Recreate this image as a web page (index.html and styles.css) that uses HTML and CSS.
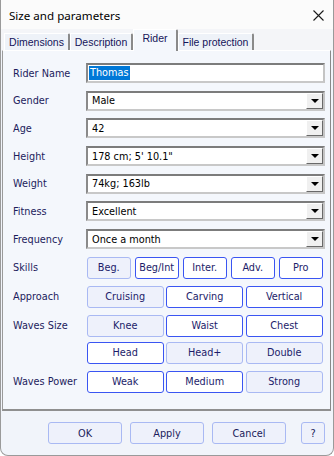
FILE: index.html
```html
<!DOCTYPE html>
<html lang="en">
<head>
  <meta charset="UTF-8" />
  <title>Size and parameters</title>
  <link rel="stylesheet" href="styles.css">
</head>
<body>

  <div class="window">
    <div class="titlebar">
      <span class="title">Size and parameters</span>
      <svg class="close" width="11" height="11" viewBox="0 0 11 11">
        <path d="M0.5 0.5 L10.5 10.5 M10.5 0.5 L0.5 10.5" stroke="#1a1a1a" stroke-width="1.1" fill="none"/>
      </svg>
    </div>

    <div class="tabs">
      <div class="tab tab-dim">Dimensions</div>
      <div class="tab tab-desc">Description</div>
      <div class="tab tab-rider active">Rider</div>
      <div class="tab tab-file">File protection</div>
    </div>

    <div class="panel">
      <div class="row">
        <span class="lbl">Rider Name</span>
        <div class="field"><span class="selected">Thomas</span></div>
      </div>
      <div class="row">
        <span class="lbl">Gender</span>
        <div class="field combo"><span class="value">Male</span><span class="drop"></span></div>
      </div>
      <div class="row">
        <span class="lbl">Age</span>
        <div class="field combo"><span class="value">42</span><span class="drop"></span></div>
      </div>
      <div class="row">
        <span class="lbl">Height</span>
        <div class="field combo"><span class="value">178 cm; 5' 10.1"</span><span class="drop"></span></div>
      </div>
      <div class="row">
        <span class="lbl">Weight</span>
        <div class="field combo"><span class="value">74kg; 163lb</span><span class="drop"></span></div>
      </div>
      <div class="row">
        <span class="lbl">Fitness</span>
        <div class="field combo"><span class="value">Excellent</span><span class="drop"></span></div>
      </div>
      <div class="row">
        <span class="lbl">Frequency</span>
        <div class="field combo"><span class="value">Once a month</span><span class="drop"></span></div>
      </div>

      <div class="row btn-row first">
        <span class="lbl">Skills</span>
        <div class="choices five">
          <span class="choice">Beg.</span>
          <span class="choice on">Beg/Int</span>
          <span class="choice on">Inter.</span>
          <span class="choice on">Adv.</span>
          <span class="choice on">Pro</span>
        </div>
      </div>
      <div class="row btn-row">
        <span class="lbl">Approach</span>
        <div class="choices three">
          <span class="choice">Cruising</span>
          <span class="choice on">Carving</span>
          <span class="choice on">Vertical</span>
        </div>
      </div>
      <div class="row btn-row top">
        <span class="lbl">Waves Size</span>
        <div class="choices three two">
          <span class="choice">Knee</span>
          <span class="choice on">Waist</span>
          <span class="choice on">Chest</span>
          <span class="choice on">Head</span>
          <span class="choice">Head+</span>
          <span class="choice">Double</span>
        </div>
      </div>
      <div class="row btn-row">
        <span class="lbl">Waves Power</span>
        <div class="choices three">
          <span class="choice on">Weak</span>
          <span class="choice on">Medium</span>
          <span class="choice">Strong</span>
        </div>
      </div>
    </div>

    <div class="footer">
      <span class="push">OK</span>
      <span class="push">Apply</span>
      <span class="push">Cancel</span>
      <span class="push help">?</span>
    </div>
  </div>

</body>
</html>
```

FILE: styles.css
```css
* {
  margin: 0;
  padding: 0;
  box-sizing: border-box;
}

body {
  background: #ffffff;
  font-family: "DejaVu Sans Condensed", "DejaVu Sans", sans-serif;
  font-stretch: condensed;
  font-size: 10.8px;
  color: #1c1c5c;
}

.window {
  width: 334px;
  height: 456px;
  display: flex;
  flex-direction: column;
  background: #f1f4fa;
  border: 1px solid #9a9a9a;
  border-top: none;
  border-radius: 0 0 8px 8px;
  overflow: hidden;
}

/* title bar */
.titlebar {
  height: 29px;
  flex: none;
  display: flex;
  align-items: center;
  justify-content: space-between;
  padding: 0 9px 0 8px;
  background: #fbfbfb;
}

.title {
  font-family: "Noto Sans", sans-serif;
  font-stretch: normal;
  font-size: 11.6px;
  color: #000;
  margin-top: 2px;
}

.close {
  margin-top: 2px;
}

/* tabs */
.tabs {
  height: 21px;
  flex: none;
  display: flex;
  align-items: flex-end;
  padding-left: 3px;
  background: #f4f5f8;
}

.tab {
  height: 17px;
  background: #eef2f8;
  border-top: 1px solid #ffffff;
  border-left: 1px solid #ffffff;
  border-right: 2px solid #8a8a8a;
  border-top-right-radius: 2px;
  text-align: center;
  line-height: 16px;
  color: #14145a;
  font-family: "Liberation Sans", sans-serif;
  font-stretch: normal;
  font-size: 10.5px;
}

.tab-dim { width: 66px; }
.tab-desc { width: 63px; }
.tab-rider { width: 45px; }
.tab-file { width: 76px; }

.tab.active {
  height: 22px;
  margin-bottom: -1px;
  background: #f4f7fc;
  line-height: 17px;
  position: relative;
  z-index: 1;
}

/* panel */
.panel {
  flex: 1;
  margin: 0 2px 0 1px;
  background: #f4f7fc;
  border-top: 1px solid #ffffff;
  border-left: 1px solid #9a9a9a;
  border-right: 1px solid #8a8a8a;
  border-bottom: 2px solid #8f8f8f;
  padding: 12px 0 0 10px;
}

.row {
  display: flex;
  align-items: center;
  margin-bottom: 7.7px;
}

.lbl {
  width: 73px;
  flex: none;
}

.field {
  width: 239px;
  height: 20px;
  display: flex;
  align-items: center;
  background: #ffffff;
  border: 2px solid #a0a0a0;
  border-top-color: #7c7c7c;
  border-left-color: #8a8a8a;
  border-bottom-color: #c8c8c8;
  border-right-color: #c4c4c4;
  color: #000;
  padding-left: 1px;
}

.selected {
  background: #0078d7;
  color: #ffffff;
  height: 14px;
  line-height: 14px;
  padding: 0 1px;
}

.combo .value {
  flex: 1;
  padding-left: 3px;
}

.drop {
  width: 17px;
  height: 16px;
  background: #f0f0f0;
  border-top: 1px solid #ffffff;
  border-left: 1px solid #ffffff;
  border-right: 1px solid #696969;
  border-bottom: 1px solid #696969;
  display: flex;
  align-items: center;
  justify-content: center;
}

.drop::after {
  content: "";
  border-left: 4px solid transparent;
  border-right: 4px solid transparent;
  border-top: 4px solid #000;
}

/* option buttons */
.btn-row {
  margin-bottom: 7px;
}

.btn-row.first {
  margin-top: 1.3px;
}

.btn-row.top {
  align-items: flex-start;
}

.btn-row.top .lbl {
  line-height: 22px;
}

.choices {
  width: 236px;
  margin-left: 0.7px;
  display: grid;
  row-gap: 4.7px;
}

.choices.five {
  grid-template-columns: repeat(5, 44px);
  column-gap: 4px;
}

.choices.three {
  grid-template-columns: repeat(3, 77px);
  column-gap: 2.5px;
}

.choice {
  height: 22px;
  display: flex;
  align-items: center;
  justify-content: center;
  background: #eef1fb;
  border: 1px solid #a9b9f3;
  border-radius: 3px;
  color: #1c1c6a;
}

.choice.on {
  background: #ffffff;
  border: 1.5px solid #3a55f2;
}

/* dialog buttons */
.footer {
  height: 44px;
  flex: none;
  display: flex;
  align-items: flex-start;
  padding: 11px 0 0 47px;
  gap: 8px;
}

.push {
  width: 74px;
  height: 22px;
  display: flex;
  align-items: center;
  justify-content: center;
  background: #eef1fb;
  border: 1px solid #a9b9f3;
  border-radius: 3px;
  color: #1c1c5c;
}

.push.help {
  width: 24px;
  margin-left: 7px;
}
```
